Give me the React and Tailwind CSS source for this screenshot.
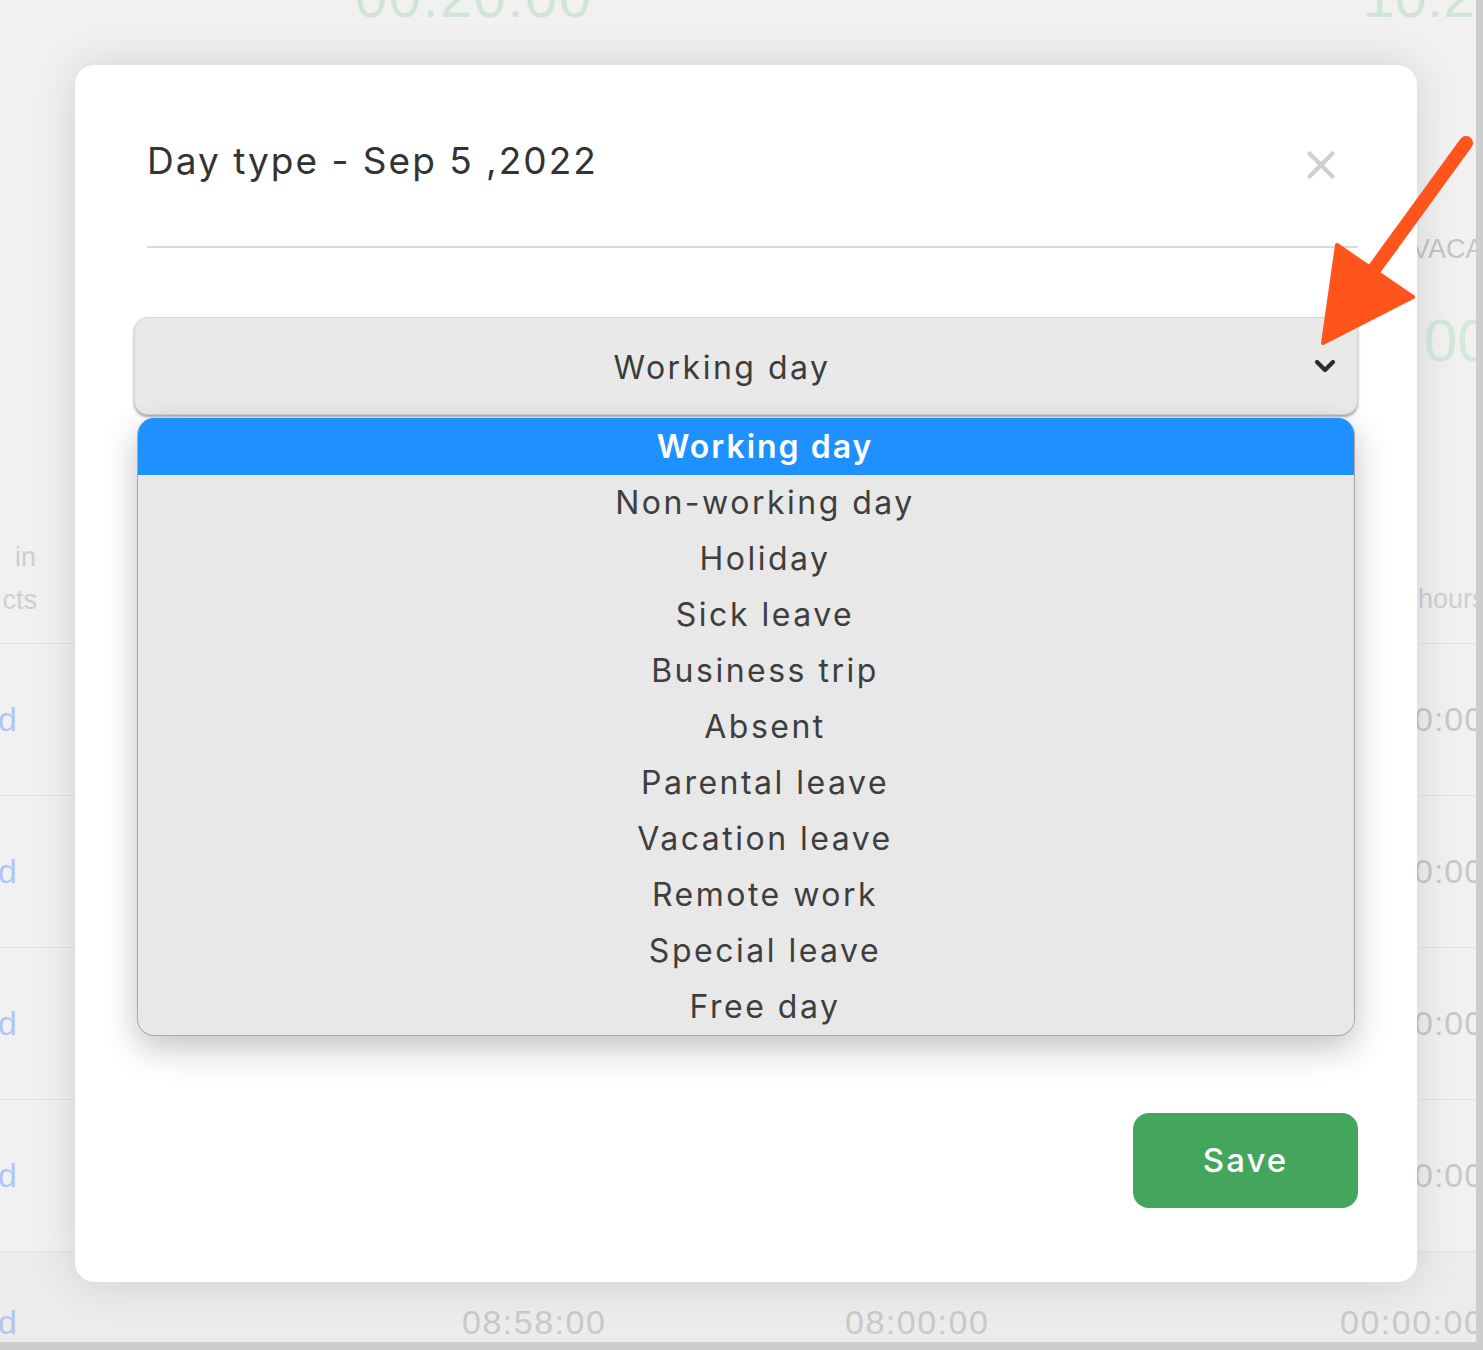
import { ChevronDown, X } from 'lucide-react';

const OPTIONS = [
  'Working day',
  'Non-working day',
  'Holiday',
  'Sick leave',
  'Business trip',
  'Absent',
  'Parental leave',
  'Vacation leave',
  'Remote work',
  'Special leave',
  'Free day',
];

const ROWS = ['a', 'b', 'c', 'd'];

function BackgroundPage() {
  return (
    <div className="w-[1476px] h-[1342px] bg-[#f1f1f1] overflow-hidden font-['Liberation_Sans',sans-serif] text-[#c9c9c9]">
      {/* top stats strip */}
      <div className="h-[22px] overflow-hidden flex">
        <span className="ml-[355px] -mt-[32px] text-[58px] leading-none text-[#cfe6d5] tracking-wide">00:20:00</span>
        <span className="ml-[770px] -mt-[32px] text-[58px] leading-none text-[#cfe6d5] whitespace-nowrap">10:20:00</span>
      </div>

      {/* header area */}
      <div className="h-[621px] flex">
        <div className="w-[36px] flex flex-col items-end pt-[514px] text-[27px] leading-[43px] text-[#cfcfcf]">
          <span>in</span>
          <span className="-mr-[1px] whitespace-nowrap">cts</span>
        </div>
        <div className="ml-auto w-[60px] flex flex-col pt-[207px] overflow-hidden">
          <span className="-ml-[4px] text-[27px] text-[#c4c4c4] whitespace-nowrap">VACATION</span>
          <span className="ml-[8px] mt-[41px] text-[60px] leading-none text-[#d3eadb] whitespace-nowrap">00:00</span>
          <span className="ml-[2px] mt-[208px] text-[27px] text-[#cfcfcf] whitespace-nowrap">hours</span>
        </div>
      </div>

      {ROWS.map((r) => (
        <div key={r} className="h-[152px] border-t border-[#e3e3e3] flex items-center">
          <span className="w-[1418px] shrink-0 -ml-[2px] text-[34px] text-[#b3c6f2]">d</span>
          <span className="text-[34px] tracking-[1px] text-[#c9c9c9] whitespace-nowrap -ml-[2px]">0:00:00</span>
        </div>
      ))}

      <div className="h-[90px] border-t border-[#e3e3e3] bg-[#ececec] flex items-end text-[34px] leading-[38px] tracking-[1.5px]">
        <span className="w-[462px] shrink-0 -ml-[2px] text-[#b3c6f2]">d</span>
        <span className="w-[383px] shrink-0 ml-[2px]">08:58:00</span>
        <span className="w-[495px] shrink-0">08:00:00</span>
        <span className="shrink-0 whitespace-nowrap">00:00:00</span>
      </div>
    </div>
  );
}

function DayTypeModal() {
  return (
    <div className="absolute left-[75px] top-[65px] w-[1342px] h-[1217px] bg-white rounded-[20px] shadow-[0_0_45px_rgba(0,0,0,0.13)] px-[59px] font-['Inter',sans-serif]">
      <div className="ml-[13px] h-[183px] flex items-center justify-between border-b-2 border-[#d9d9d9] pt-[10px]">
        <h2 className="text-[37px] text-[#333] tracking-[2px]">Day type - Sep 5 ,2022</h2>
        <X className="w-[46px] h-[46px] mr-[14px] mt-[8px] text-[#cfcfcf]" strokeWidth={2.2} />
      </div>

      <div className="mt-[69px] h-[98px] rounded-[14px] bg-[#e9e9e9] border border-[#d4d4d4] shadow-[0_2px_3px_rgba(0,0,0,0.35)] flex items-center">
        <span className="flex-1 text-center pt-[4px] text-[32px] tracking-[2.5px] text-[#3c3c3c]">Working day</span>
        <ChevronDown className="w-[32px] h-[32px] mr-[16px] text-[#2c2c2c]" strokeWidth={3.2} />
      </div>

      <div className="mt-[3px] mx-[3px] rounded-[17px] overflow-hidden bg-[#e8e8e8] border border-[#a9a9a9] border-t-0 shadow-[0_12px_34px_rgba(0,0,0,0.24)]">
        {OPTIONS.map((opt, i) => (
          <div
            key={opt}
            className={
              i === 0
                ? 'h-[57px] flex items-center justify-center pl-[38px] bg-[#1e90ff] text-white text-[32px] tracking-[2px] font-semibold'
                : 'h-[56px] flex items-center justify-center pl-[38px] text-[#3e3e3e] text-[32px] tracking-[2.5px]'
            }
          >
            {opt}
          </div>
        ))}
      </div>

      <div className="mt-[77px] flex justify-end">
        <button className="w-[225px] h-[95px] rounded-[16px] bg-[#44a55c] text-white text-[33px] tracking-[2px] font-medium">
          Save
        </button>
      </div>
    </div>
  );
}

export default function App() {
  return (
    <div className="relative w-[1483px] h-[1350px] overflow-hidden bg-[#cdcdcd]">
      <BackgroundPage />
      <DayTypeModal />

      {/* annotation arrow */}
      <svg className="absolute left-0 top-0 pointer-events-none" width="1483" height="1350">
        <line x1="1466" y1="143" x2="1370" y2="275" stroke="#ff541b" strokeWidth="14" strokeLinecap="round" />
        <polygon
          points="1337,245 1413,297 1323,343"
          fill="#ff541b"
          stroke="#ff541b"
          strokeWidth="4"
          strokeLinejoin="round"
        />
      </svg>
    </div>
  );
}
